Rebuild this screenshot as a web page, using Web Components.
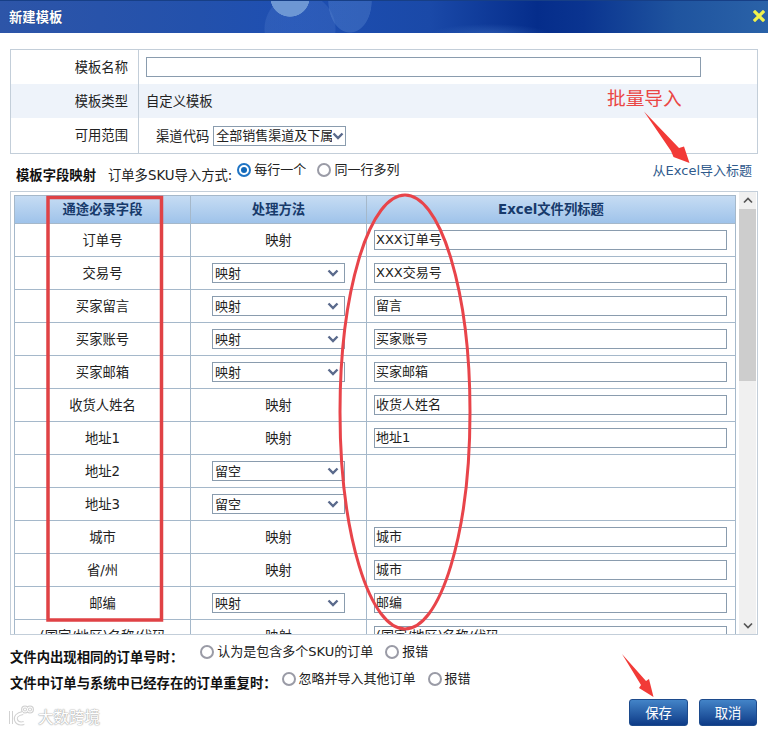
<!DOCTYPE html>
<html lang="zh">
<head>
<meta charset="utf-8">
<title>新建模板</title>
<style>
  html, body { margin: 0; padding: 0; background: #fff; }
  body { width: 768px; height: 733px; overflow: hidden; font: 13.33px "DejaVu Sans", "Noto Sans CJK SC", sans-serif; color: #222; }
</style>
</head>
<body>
<template-dialog></template-dialog>

<script>
const FONT = `"DejaVu Sans", "Noto Sans CJK SC", sans-serif`;
const CHEVRON = `<svg width="12" height="8" viewBox="0 0 12 8"><path d="M1.500 1.500 6 6l4.500-4.500" fill="none" stroke="#5a6a8c" stroke-width="2.400"/></svg>`;

class TplInput extends HTMLElement {
    constructor() {
        super();
        this.attachShadow({ mode: "open" });
        this.shadowRoot.innerHTML = `
        <style>
          :host {
            display: block;
            box-sizing: border-box;
            height: 20px;
            border: 1px solid #8a9cae;
            background: #fff;
            padding-left: 1px;
            font-size: 13px;
            line-height: 18px;
            white-space: nowrap;
            overflow: hidden;
            color: #222;
          }
        </style>
        <slot></slot>`;
    }
}
customElements.define("tpl-input", TplInput);

class TplSelect extends HTMLElement {
    constructor() {
        super();
        this.attachShadow({ mode: "open" });
        this.shadowRoot.innerHTML = `
        <style>
          :host {
            display: flex;
            align-items: center;
            box-sizing: border-box;
            width: 133px;
            height: 20px;
            border: 1px solid #8a9cae;
            background: #fff;
            padding: 0 5px 0 2px;
            font-size: 13px;
            line-height: 18px;
            color: #222;
          }
          .text { flex: 1; min-width: 0; overflow: hidden; white-space: nowrap; padding-top: 1px; }
          svg { flex: none; display: block; }
        </style>
        <div class="text"><slot></slot></div>${CHEVRON}`;
    }
}
customElements.define("tpl-select", TplSelect);

class TplRadio extends HTMLElement {
    constructor() {
        super();
        this.attachShadow({ mode: "open" });
        this.shadowRoot.innerHTML = `
        <style>
          :host { display: inline-flex; align-items: center; gap: 3px; font-size: 13px; line-height: 16px; white-space: nowrap; color: #222; }
          .dot {
            box-sizing: border-box;
            width: 14px; height: 14px;
            border-radius: 50%;
            border: 2px solid #9a9ba6;
            background: #fff;
            display: flex; align-items: center; justify-content: center;
          }
          :host([checked]) .dot { border-color: #1f74c4; }
          :host([checked]) .dot::after { content: ""; width: 6px; height: 6px; border-radius: 50%; background: #1268b8; }
        </style>
        <span class="dot"></span><slot></slot>`;
    }
}
customElements.define("tpl-radio", TplRadio);

class TitleBar extends HTMLElement {
    constructor() {
        super();
        this.attachShadow({ mode: "open" });
        this.shadowRoot.innerHTML = `
        <style>
          :host {
            display: flex;
            align-items: center;
            justify-content: space-between;
            box-sizing: border-box;
            height: 33px;
            padding: 0 3px 2px 9px;
            color: #fff;
            font-weight: bold;
            text-shadow: 0 0 1px #0c2a6a;
            border-top: 1px solid #173f86;
            background:
              radial-gradient(circle 20px at 290px -4px, #6d97d4 97%, transparent 100%),
              radial-gradient(ellipse 22px 32px at 350px 0px, rgba(110,155,220,.28) 97%, transparent 100%),
              radial-gradient(circle 36px at 300px 28px, rgba(110,150,220,.18) 97%, transparent 100%),
              radial-gradient(ellipse 60px 10px at 490px 33px, rgba(70,120,200,.45), transparent),
              linear-gradient(90deg, #2d55a8 0, #2351ac 26%, #1e4fb2 38%, #1a49a8 56%, #052d8b 70%, #0a3490 76%, #1f549f 88%, #2a62a8 100%);
          }
          svg { display: block; }
        </style>
        <span>新建模板</span>
        <svg width="12" height="12" viewBox="0 0 12 12"><path d="M2 2l8 8M10 2l-8 8" stroke="#f1f24c" stroke-width="3.200" stroke-linecap="square"/></svg>`;
    }
}
customElements.define("title-bar", TitleBar);

class FormRow extends HTMLElement {
    constructor() {
        super();
        this.attachShadow({ mode: "open" });
        this.shadowRoot.innerHTML = `
        <style>
          :host { display: grid; grid-template-columns: 128px 1fr; height: 34px; align-items: stretch; }
          :host([alt]) { background: #eef3fa; }
          .label { display: flex; align-items: center; justify-content: flex-end; padding: 0 10px 2px 0; border-right: 1px solid #c3ced9; }
          .value { display: flex; align-items: center; padding: 0 0 0 7px; }
        </style>
        <div class="label">${this.getAttribute("label")}</div>
        <div class="value"><slot></slot></div>`;
    }
}
customElements.define("form-row", FormRow);

class MapRow extends HTMLElement {
    constructor() {
        super();
        this.attachShadow({ mode: "open" });
        this.shadowRoot.innerHTML = `
        <style>
          :host {
            display: grid;
            grid-template-columns: 176px 176px 1fr;
            box-sizing: border-box;
            height: 33px;
            border-bottom: 1px solid #a5b8ca;
            flex: none;
          }
          .cell { display: flex; align-items: center; justify-content: center; border-right: 1px solid #a5b8ca; min-width: 0; white-space: nowrap; }
          .name { padding-bottom: 2px; }
          .method { justify-content: flex-start; padding-left: 21px; }
          .method.plain { justify-content: center; padding: 0 0 2px; }
          .cell:last-child { border-right: 0; justify-content: stretch; padding: 0 7px; }
          tpl-input { width: 353px; }
        </style>`;
        const name = this.getAttribute("name");
        const method = this.getAttribute("method");
        const title = this.getAttribute("title-text");
        const plain = method === "映射" && this.hasAttribute("fixed");
        this.shadowRoot.innerHTML += `
        <div class="cell name">${name}</div>
        <div class="cell method ${plain ? "plain" : ""}">${plain ? method : `<tpl-select>${method}</tpl-select>`}</div>
        <div class="cell">${title ? `<tpl-input>${title}</tpl-input>` : ""}</div>`;
    }
}
customElements.define("map-row", MapRow);

class MapTable extends HTMLElement {
    constructor() {
        super();
        this.attachShadow({ mode: "open" });
        const rows = [
            ["订单号", "映射", "XXX订单号", 1],
            ["交易号", "映射", "XXX交易号"],
            ["买家留言", "映射", "留言"],
            ["买家账号", "映射", "买家账号"],
            ["买家邮箱", "映射", "买家邮箱"],
            ["收货人姓名", "映射", "收货人姓名", 1],
            ["地址1", "映射", "地址1", 1],
            ["地址2", "留空", ""],
            ["地址3", "留空", ""],
            ["城市", "映射", "城市", 1],
            ["省/州", "映射", "城市", 1],
            ["邮编", "映射", "邮编"],
            ["(国家/地区)名称/代码", "映射", "(国家/地区)名称/代码", 1],
        ].map(([n, m, t, f]) => `<map-row name="${n}" method="${m}" title-text="${t}" ${f ? "fixed" : ""}></map-row>`).join("");
        this.shadowRoot.innerHTML = `
        <style>
          :host {
            display: flex;
            box-sizing: border-box;
            height: 444px;
            margin: 0 10px;
            border: 1px solid #c3ced9;
            overflow: hidden;
          }
          .view { width: 728px; flex: none; padding: 3px 0 0 3px; box-sizing: border-box; overflow: hidden; }
          .table { width: 722px; box-sizing: border-box; border: 1px solid #a5b8ca; border-bottom: 0; }
          .head {
            display: grid;
            grid-template-columns: 176px 176px 1fr;
            box-sizing: border-box;
            height: 28px;
            border-bottom: 1px solid #a5b8ca;
            background: linear-gradient(#c6dcf3, #9fc3ea);
            font-weight: bold;
            color: #173a6b;
          }
          .head div { display: flex; align-items: center; justify-content: center; padding-bottom: 2px; border-right: 1px solid #a5b8ca; }
          .head div:last-child { border-right: 0; }
          .bar { width: 17px; background: #f0f0f0; display: flex; flex-direction: column; flex: none; }
          .btn { height: 17px; flex: none; display: flex; align-items: center; justify-content: center; }
          .thumb { height: 172px; background: #cdcdcd; flex: none; }
          .rest { flex: 1; }
          svg { display: block; }
        </style>
        <div class="view">
          <div class="table">
            <div class="head"><div>通途必录字段</div><div>处理方法</div><div>Excel文件列标题</div></div>
            ${rows}
          </div>
        </div>
        <div class="bar">
          <div class="btn"><svg width="10" height="7" viewBox="0 0 10 7"><path d="M1 5.500l4-4 4 4" fill="none" stroke="#555" stroke-width="1.700"/></svg></div>
          <div class="thumb"></div>
          <div class="rest"></div>
          <div class="btn"><svg width="10" height="7" viewBox="0 0 10 7"><path d="M1 1.500l4 4 4-4" fill="none" stroke="#555" stroke-width="1.700"/></svg></div>
        </div>`;
    }
}
customElements.define("map-table", MapTable);

class TplButton extends HTMLElement {
    constructor() {
        super();
        this.attachShadow({ mode: "open" });
        this.shadowRoot.innerHTML = `
        <style>
          :host {
            display: flex;
            align-items: center;
            justify-content: center;
            box-sizing: border-box;
            height: 27px;
            width: 59px;
            border-radius: 3px;
            border: 1px solid #1c4a8c;
            background: linear-gradient(#4384c8, #0e3b87);
            color: #fff;
          }
          :host([narrow]) { width: 58px; }
        </style>
        <slot></slot>`;
    }
}
customElements.define("tpl-button", TplButton);

// annotations painted over the screenshot, plus the faint watermark
class MarkupLayer extends HTMLElement {
    constructor() {
        super();
        this.attachShadow({ mode: "open" });
        this.shadowRoot.innerHTML = `
        <style>
          :host { position: absolute; left: 0; top: 0; width: 768px; height: 733px; pointer-events: none; }
          svg { position: absolute; left: 0; top: 0; }
          .note { position: absolute; left: 607px; top: 85px; font-size: 18.700px; line-height: 28px; color: #ea4644; white-space: nowrap; }
          .mark { position: absolute; left: 38px; top: 708px; font-size: 15.500px; line-height: 20px; color: #fff; white-space: nowrap; text-shadow: 0 0 1px #aaa, 0 0 1px #aaa, 0 0 2px #bbb; }
        </style>
        <svg width="768" height="733" viewBox="0 0 768 733">
          <rect x="48" y="197.500" width="113.500" height="422.500" fill="none" stroke="#e04245" stroke-width="3.500"/>
          <ellipse cx="405" cy="412" rx="65" ry="217" fill="none" stroke="#e8444a" stroke-width="3"/>
          <path d="M644 111.500 679 148 684 146.500 689.500 163 673.500 157 671 151Z" fill="#f23a37"/>
          <path d="M622 654 646 681 649 679 653.500 697 639 688 641 685Z" fill="#f23a37"/>
          <g fill="none" stroke="#d2d2d2" stroke-width="4">
            <path d="M11 711v13M23 713c-6 1-8 4-7 7s4 4 8 3"/>
            <circle cx="25" cy="709.500" r="2.500" stroke-width="3"/><circle cx="30" cy="709.500" r="2.500" stroke-width="3"/>
          </g>
          <g fill="none" stroke="#fff" stroke-width="2">
            <path d="M11 711v13M23 713c-6 1-8 4-7 7s4 4 8 3"/>
            <circle cx="25" cy="709.500" r="2.500" stroke-width="1"/><circle cx="30" cy="709.500" r="2.500" stroke-width="1"/>
          </g>
        </svg>
        <div class="note">批量导入</div>
        <div class="mark">大数跨境</div>`;
    }
}
customElements.define("markup-layer", MarkupLayer);

class TemplateDialog extends HTMLElement {
    constructor() {
        super();
        this.attachShadow({ mode: "open" });
        this.shadowRoot.innerHTML = `
        <style>
          :host { display: block; position: relative; width: 768px; height: 733px; font-family: ${FONT}; font-size: 13.33px; color: #222; overflow: hidden; }
          .form { margin: 16px 10px 0; border: 1px solid #c3ced9; }
          .form form-row:nth-child(3) { height: 35px; }
          .name { width: 555px; }
          .range { display: flex; align-items: center; gap: 4px; padding-left: 10px; }
          .range tpl-select { padding-right: 1px; }
          .mapping { display: flex; height: 37px; margin: 0 15px 0 16px; align-items: center; }
          .mapping b { font-weight: bold; color: #111; margin-top: 3px; }
          .mapping .how { margin: 3px 0 0 12px; }
          .mapping tpl-radio { margin: -6px 0 0 5px; }
          .mapping tpl-radio + tpl-radio { margin-left: 11px; }
          .mapping a { margin: -6px 1px 0 auto; font-size: 13px; color: #2f5a8c; }
          .opts { height: 64px; padding: 0 10px; box-sizing: border-box; }
          .opt { display: flex; height: 27px; align-items: flex-start; }
          .opt b { color: #111; margin-top: 15px; line-height: 16px; }
          .opt + .opt b { margin-top: 14px; }
          .opt tpl-radio { margin-top: 9px; }
          .actions { display: flex; justify-content: flex-end; gap: 11px; padding-right: 11px; }
        </style>
        <title-bar></title-bar>
        <div class="form">
          <form-row label="模板名称"><tpl-input class="name"></tpl-input></form-row>
          <form-row label="模板类型" alt><span style="padding-bottom:2px">自定义模板</span></form-row>
          <form-row label="可用范围"><div class="range">渠道代码<tpl-select>全部销售渠道及下属</tpl-select></div></form-row>
        </div>
        <div class="mapping">
          <b>模板字段映射</b><span class="how">订单多SKU导入方式:</span>
          <tpl-radio checked>每行一个</tpl-radio><tpl-radio>同一行多列</tpl-radio>
          <a>从Excel导入标题</a>
        </div>
        <map-table></map-table>
        <div class="opts">
          <div class="opt"><b>文件内出现相同的订单号时：</b>
            <tpl-radio style="margin-left:17px">认为是包含多个SKU的订单</tpl-radio><tpl-radio style="margin-left:12px">报错</tpl-radio></div>
          <div class="opt"><b>文件中订单与系统中已经存在的订单重复时：</b>
            <tpl-radio style="margin-left:5px">忽略并导入其他订单</tpl-radio><tpl-radio style="margin-left:12px">报错</tpl-radio></div>
        </div>
        <div class="actions"><tpl-button>保存</tpl-button><tpl-button narrow>取消</tpl-button></div>
        <markup-layer></markup-layer>`;
    }
}
customElements.define("template-dialog", TemplateDialog);
</script>
</body>
</html>
